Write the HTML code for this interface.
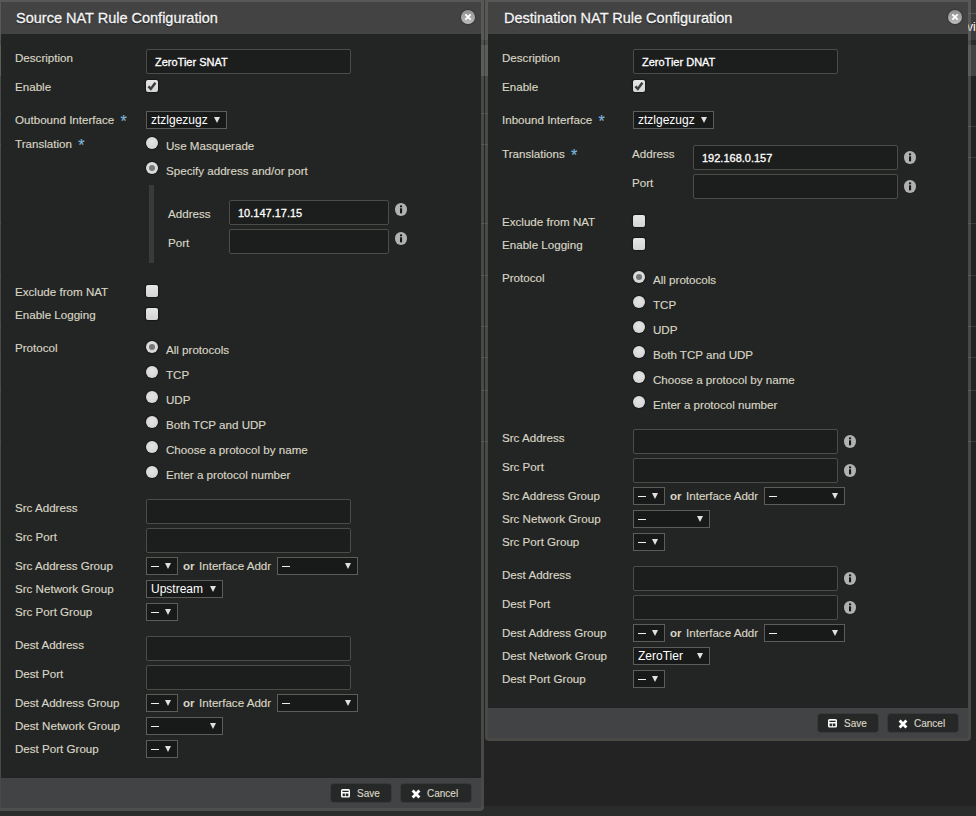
<!DOCTYPE html><html><head><meta charset="utf-8"><style>
html,body{margin:0;padding:0;width:976px;height:816px;overflow:hidden;background:#222322;position:relative;font-family:"Liberation Sans",sans-serif}
div{position:absolute;box-sizing:border-box}
.bg1{left:0;top:0;width:976px;height:40px;background:#3b3b3b}
.bg2{left:0;top:40px;width:976px;height:5px;background:#2b2b2b}
.bg3{left:0;top:45px;width:976px;height:31px;background:#434343}
.bgl{left:0;width:976px;height:1px;background:#3a3b3b}
.bgb{left:0;top:806px;width:976px;height:10px;background:#2a2b2b}
.dlg{border:3px solid rgba(128,128,124,0.42);border-radius:0 0 4px 4px;box-sizing:content-box}
.hdr{left:0;top:0;width:480px;height:32px;background:#434344}
.body{left:0;top:32px;width:480px;background:#232524}
.ftr{left:0;width:480px;height:30px;background:#424344}
.title{font-size:14.5px;color:#f5f5f5;line-height:18px;white-space:nowrap;text-shadow:0 1px 1px rgba(0,0,0,0.7);-webkit-text-stroke:0.3px #f5f5f5}
.lbl,.opt{font-size:11.6px;line-height:14px;color:#d9d5c5;white-space:nowrap;-webkit-text-stroke:0.15px #d9d5c5}
.star{color:#5aaee6;font-size:16px;line-height:10px;display:inline-block;vertical-align:-3px;margin-left:3px}
.inp{border:1px solid #4c4b48;border-radius:2px;background:#1c1d1d}
.itxt{position:absolute;left:8px;top:5px;font-size:11px;line-height:14px;color:#fff;white-space:nowrap;-webkit-text-stroke:0.3px #fff}
.sel{height:18px;border:1px solid #5e5c58;background:#181919}
.stxt{position:absolute;left:4px;top:1px;font-size:12px;line-height:15px;color:#fff;white-space:nowrap}
.arr{position:absolute;right:6px;top:5px;width:0;height:0;border-left:3.3px solid transparent;border-right:3.3px solid transparent;border-top:6px solid #e0e0e0}
.chk{width:12px;height:12px;border-radius:2px;background:linear-gradient(#e6e6e6,#d4d4d4);box-shadow:0 0 1px 1px rgba(0,0,0,0.35)}
.chk svg{position:absolute;left:0;top:0}
.rad{width:12px;height:12px;border-radius:50%;background:radial-gradient(circle at 50% 40%,#e4e4e4,#d0d0d0);box-shadow:0 0 1px 1px rgba(0,0,0,0.3)}
.rad i{position:absolute;left:3px;top:3px;width:6px;height:6px;border-radius:50%;background:#767676}
.info{width:12px;height:12.5px;border-radius:50%;background:#b1b1b1}
.info svg{position:absolute;left:0;top:0}
.vbar{background:#3a3b39}
.btn{height:18px;background:#262828;border-radius:3px;box-shadow:0 0 0 1px rgba(30,30,30,0.25)}
.btn svg{position:absolute;left:10px;top:5px}
.btn svg.fl{top:5px}
.btn span{position:absolute;left:26px;top:4px;font-size:10px;line-height:12px;color:#d9d5c5;white-space:nowrap;-webkit-text-stroke:0.15px #d9d5c5}
.close{width:14px;height:14px;border-radius:50%;background:linear-gradient(#8e8e8e,#bdbdbd);box-shadow:0 0 1px 1px rgba(0,0,0,0.18)}
.close svg{position:absolute;left:0;top:0}
.or{font-weight:bold;-webkit-text-stroke:0 !important}
.dash{position:absolute;left:3.5px;top:8.2px;width:8.4px;height:1.2px;background:#eeeeee}
</style></head><body>
<div class="bg1"></div><div class="bgl" style="top:13px;left:968px;width:8px;background:#565656"></div><div class="bg2"></div><div class="bg3"></div>

<div class="bgl" style="top:223px"></div>
<div class="bgl" style="top:275px"></div>
<div class="bgl" style="top:326px"></div>
<div class="bgl" style="top:357px"></div>
<div class="bgl" style="top:390px"></div>
<div class="bgl" style="top:441px"></div>
<div class="bgl" style="top:113px;width:700px"></div>
<div class="bgl" style="top:144px;width:700px"></div>
<div class="bgl" style="top:126px;left:700px;width:276px"></div>
<div class="bgl" style="top:157px;left:700px;width:276px"></div>
<div class="bgb"></div>
<div style="left:967px;top:20px;font-size:12px;line-height:14px;color:#fff">vie</div>
<div class="dlg" style="left:-2px;top:-1px;width:480px;height:806px">
<div class="hdr"></div><div class="body" style="height:744px"></div><div class="ftr" style="top:776px"></div>
</div>
<div class="dlg" style="left:485px;top:-1px;width:480px;height:736px">
<div class="hdr"></div><div class="body" style="height:674px"></div><div class="ftr" style="top:706px"></div>
</div>
<div class="title" style="left:16px;top:9px">Source NAT Rule Configuration</div>
<div class="close" style="left:461px;top:10px"><svg width="14" height="14" viewBox="0 0 14 14"><path d="M4.3 4.3 L9.7 9.7 M9.7 4.3 L4.3 9.7" stroke="#fff" stroke-width="1.8"/></svg></div>
<div class="title" style="left:504px;top:9px">Destination NAT Rule Configuration</div>
<div class="close" style="left:948px;top:10px"><svg width="14" height="14" viewBox="0 0 14 14"><path d="M4.3 4.3 L9.7 9.7 M9.7 4.3 L4.3 9.7" stroke="#fff" stroke-width="1.8"/></svg></div>
<div class="lbl" style="left:15px;top:51px">Description</div>
<div class="inp" style="left:146px;top:49px;width:205px;height:25px"><span class="itxt">ZeroTier SNAT</span></div>
<div class="lbl" style="left:15px;top:80px">Enable</div>
<div class="chk" style="left:146px;top:80px"><svg width="12" height="12" viewBox="0 0 12 12"><path d="M2.4 6.4 L4.8 8.9 L9.4 2.7" stroke="#3c3c3c" stroke-width="2.5" fill="none" stroke-linecap="butt"/></svg></div>
<div class="lbl" style="left:15px;top:113px">Outbound Interface <span class="star">*</span></div>
<div class="sel" style="left:146px;top:111px;width:81px"><span class="stxt">ztzlgezugz</span><i class="arr"></i></div>
<div class="lbl" style="left:15px;top:137px">Translation <span class="star">*</span></div>
<div class="rad" style="left:146px;top:137px"></div>
<div class="opt" style="left:166px;top:139px">Use Masquerade</div>
<div class="rad" style="left:146px;top:162px"><i></i></div>
<div class="opt" style="left:166px;top:164px">Specify address and/or port</div>
<div class="vbar" style="left:149px;top:185px;width:5px;height:78px"></div>
<div class="lbl" style="left:168px;top:207px">Address</div>
<div class="inp" style="left:229px;top:200px;width:160px;height:25px"><span class="itxt">10.147.17.15</span></div>
<div class="info" style="left:395px;top:203px"><svg width="12" height="12" viewBox="0 0 12 12"><rect x="5" y="2.4" width="2.1" height="1.9" fill="#161616"/><rect x="5" y="5.3" width="2.1" height="5" fill="#161616"/></svg></div>
<div class="lbl" style="left:168px;top:236px">Port</div>
<div class="inp" style="left:229px;top:229px;width:160px;height:25px"></div>
<div class="info" style="left:395px;top:232px"><svg width="12" height="12" viewBox="0 0 12 12"><rect x="5" y="2.4" width="2.1" height="1.9" fill="#161616"/><rect x="5" y="5.3" width="2.1" height="5" fill="#161616"/></svg></div>
<div class="lbl" style="left:15px;top:285px">Exclude from NAT</div>
<div class="chk" style="left:146px;top:285px"></div>
<div class="lbl" style="left:15px;top:308px">Enable Logging</div>
<div class="chk" style="left:146px;top:308px"></div>
<div class="lbl" style="left:15px;top:341px">Protocol</div>
<div class="rad" style="left:146px;top:341px"><i></i></div>
<div class="opt" style="left:166px;top:343px">All protocols</div>
<div class="rad" style="left:146px;top:366px"></div>
<div class="opt" style="left:166px;top:368px">TCP</div>
<div class="rad" style="left:146px;top:391px"></div>
<div class="opt" style="left:166px;top:393px">UDP</div>
<div class="rad" style="left:146px;top:416px"></div>
<div class="opt" style="left:166px;top:418px">Both TCP and UDP</div>
<div class="rad" style="left:146px;top:441px"></div>
<div class="opt" style="left:166px;top:443px">Choose a protocol by name</div>
<div class="rad" style="left:146px;top:466px"></div>
<div class="opt" style="left:166px;top:468px">Enter a protocol number</div>
<div class="lbl" style="left:15px;top:501px">Src Address</div>
<div class="inp" style="left:146px;top:499px;width:205px;height:25px"></div>
<div class="lbl" style="left:15px;top:530px">Src Port</div>
<div class="inp" style="left:146px;top:528px;width:205px;height:25px"></div>
<div class="lbl" style="left:15px;top:559px">Src Address Group</div>
<div class="sel" style="left:146px;top:557px;width:32px"><i class="dash"></i><i class="arr"></i></div>
<div class="opt or" style="left:183px;top:559px">or</div>
<div class="opt" style="left:199px;top:559px">Interface Addr</div>
<div class="sel" style="left:277px;top:557px;width:81px"><i class="dash"></i><i class="arr"></i></div>
<div class="lbl" style="left:15px;top:582px">Src Network Group</div>
<div class="sel" style="left:146px;top:580px;width:77px"><span class="stxt">Upstream</span><i class="arr"></i></div>
<div class="lbl" style="left:15px;top:605px">Src Port Group</div>
<div class="sel" style="left:146px;top:603px;width:32px"><i class="dash"></i><i class="arr"></i></div>
<div class="lbl" style="left:15px;top:638px">Dest Address</div>
<div class="inp" style="left:146px;top:636px;width:205px;height:25px"></div>
<div class="lbl" style="left:15px;top:667px">Dest Port</div>
<div class="inp" style="left:146px;top:665px;width:205px;height:25px"></div>
<div class="lbl" style="left:15px;top:696px">Dest Address Group</div>
<div class="sel" style="left:146px;top:694px;width:32px"><i class="dash"></i><i class="arr"></i></div>
<div class="opt or" style="left:183px;top:696px">or</div>
<div class="opt" style="left:199px;top:696px">Interface Addr</div>
<div class="sel" style="left:277px;top:694px;width:81px"><i class="dash"></i><i class="arr"></i></div>
<div class="lbl" style="left:15px;top:719px">Dest Network Group</div>
<div class="sel" style="left:146px;top:717px;width:77px"><i class="dash"></i><i class="arr"></i></div>
<div class="lbl" style="left:15px;top:742px">Dest Port Group</div>
<div class="sel" style="left:146px;top:740px;width:32px"><i class="dash"></i><i class="arr"></i></div>
<div class="btn" style="left:331px;top:784px;width:60px"><svg width="9" height="9" viewBox="0 0 9 9"><rect x="0" y="0" width="9" height="8.6" rx="1.6" fill="#fff"/><rect x="1.4" y="1.7" width="6.2" height="1.3" fill="#262828"/><rect x="1.6" y="4.5" width="2.3" height="2.7" fill="#262828"/><rect x="4.7" y="4.5" width="2.7" height="2.7" fill="#262828"/></svg><span>Save</span></div>
<div class="btn" style="left:401px;top:784px;width:70px"><svg width="10" height="10" viewBox="0 0 10 10" style="top:4.5px"><path d="M1.6 1.6 L8.4 8.4 M8.4 1.6 L1.6 8.4" stroke="#fff" stroke-width="2.8"/></svg><span>Cancel</span></div>
<div class="lbl" style="left:502px;top:51px">Description</div>
<div class="inp" style="left:633px;top:49px;width:205px;height:25px"><span class="itxt">ZeroTier DNAT</span></div>
<div class="lbl" style="left:502px;top:80px">Enable</div>
<div class="chk" style="left:633px;top:80px"><svg width="12" height="12" viewBox="0 0 12 12"><path d="M2.4 6.4 L4.8 8.9 L9.4 2.7" stroke="#3c3c3c" stroke-width="2.5" fill="none" stroke-linecap="butt"/></svg></div>
<div class="lbl" style="left:502px;top:113px">Inbound Interface <span class="star">*</span></div>
<div class="sel" style="left:633px;top:111px;width:81px"><span class="stxt">ztzlgezugz</span><i class="arr"></i></div>
<div class="lbl" style="left:502px;top:147px">Translations <span class="star">*</span></div>
<div class="lbl" style="left:632px;top:147px">Address</div>
<div class="inp" style="left:693px;top:145px;width:205px;height:25px"><span class="itxt">192.168.0.157</span></div>
<div class="info" style="left:904px;top:151px"><svg width="12" height="12" viewBox="0 0 12 12"><rect x="5" y="2.4" width="2.1" height="1.9" fill="#161616"/><rect x="5" y="5.3" width="2.1" height="5" fill="#161616"/></svg></div>
<div class="lbl" style="left:632px;top:176px">Port</div>
<div class="inp" style="left:693px;top:174px;width:205px;height:25px"></div>
<div class="info" style="left:904px;top:180px"><svg width="12" height="12" viewBox="0 0 12 12"><rect x="5" y="2.4" width="2.1" height="1.9" fill="#161616"/><rect x="5" y="5.3" width="2.1" height="5" fill="#161616"/></svg></div>
<div class="lbl" style="left:502px;top:215px">Exclude from NAT</div>
<div class="chk" style="left:633px;top:215px"></div>
<div class="lbl" style="left:502px;top:238px">Enable Logging</div>
<div class="chk" style="left:633px;top:238px"></div>
<div class="lbl" style="left:502px;top:271px">Protocol</div>
<div class="rad" style="left:633px;top:271px"><i></i></div>
<div class="opt" style="left:653px;top:273px">All protocols</div>
<div class="rad" style="left:633px;top:296px"></div>
<div class="opt" style="left:653px;top:298px">TCP</div>
<div class="rad" style="left:633px;top:321px"></div>
<div class="opt" style="left:653px;top:323px">UDP</div>
<div class="rad" style="left:633px;top:346px"></div>
<div class="opt" style="left:653px;top:348px">Both TCP and UDP</div>
<div class="rad" style="left:633px;top:371px"></div>
<div class="opt" style="left:653px;top:373px">Choose a protocol by name</div>
<div class="rad" style="left:633px;top:396px"></div>
<div class="opt" style="left:653px;top:398px">Enter a protocol number</div>
<div class="lbl" style="left:502px;top:431px">Src Address</div>
<div class="inp" style="left:633px;top:429px;width:205px;height:25px"></div>
<div class="lbl" style="left:502px;top:460px">Src Port</div>
<div class="inp" style="left:633px;top:458px;width:205px;height:25px"></div>
<div class="info" style="left:844px;top:435px"><svg width="12" height="12" viewBox="0 0 12 12"><rect x="5" y="2.4" width="2.1" height="1.9" fill="#161616"/><rect x="5" y="5.3" width="2.1" height="5" fill="#161616"/></svg></div>
<div class="info" style="left:844px;top:464px"><svg width="12" height="12" viewBox="0 0 12 12"><rect x="5" y="2.4" width="2.1" height="1.9" fill="#161616"/><rect x="5" y="5.3" width="2.1" height="5" fill="#161616"/></svg></div>
<div class="lbl" style="left:502px;top:489px">Src Address Group</div>
<div class="sel" style="left:633px;top:487px;width:32px"><i class="dash"></i><i class="arr"></i></div>
<div class="opt or" style="left:670px;top:489px">or</div>
<div class="opt" style="left:686px;top:489px">Interface Addr</div>
<div class="sel" style="left:764px;top:487px;width:81px"><i class="dash"></i><i class="arr"></i></div>
<div class="lbl" style="left:502px;top:512px">Src Network Group</div>
<div class="sel" style="left:633px;top:510px;width:77px"><i class="dash"></i><i class="arr"></i></div>
<div class="lbl" style="left:502px;top:535px">Src Port Group</div>
<div class="sel" style="left:633px;top:533px;width:32px"><i class="dash"></i><i class="arr"></i></div>
<div class="lbl" style="left:502px;top:568px">Dest Address</div>
<div class="inp" style="left:633px;top:566px;width:205px;height:25px"></div>
<div class="lbl" style="left:502px;top:597px">Dest Port</div>
<div class="inp" style="left:633px;top:595px;width:205px;height:25px"></div>
<div class="info" style="left:844px;top:572px"><svg width="12" height="12" viewBox="0 0 12 12"><rect x="5" y="2.4" width="2.1" height="1.9" fill="#161616"/><rect x="5" y="5.3" width="2.1" height="5" fill="#161616"/></svg></div>
<div class="info" style="left:844px;top:601px"><svg width="12" height="12" viewBox="0 0 12 12"><rect x="5" y="2.4" width="2.1" height="1.9" fill="#161616"/><rect x="5" y="5.3" width="2.1" height="5" fill="#161616"/></svg></div>
<div class="lbl" style="left:502px;top:626px">Dest Address Group</div>
<div class="sel" style="left:633px;top:624px;width:32px"><i class="dash"></i><i class="arr"></i></div>
<div class="opt or" style="left:670px;top:626px">or</div>
<div class="opt" style="left:686px;top:626px">Interface Addr</div>
<div class="sel" style="left:764px;top:624px;width:81px"><i class="dash"></i><i class="arr"></i></div>
<div class="lbl" style="left:502px;top:649px">Dest Network Group</div>
<div class="sel" style="left:633px;top:647px;width:77px"><span class="stxt">ZeroTier</span><i class="arr"></i></div>
<div class="lbl" style="left:502px;top:672px">Dest Port Group</div>
<div class="sel" style="left:633px;top:670px;width:32px"><i class="dash"></i><i class="arr"></i></div>
<div class="btn" style="left:818px;top:714px;width:60px"><svg width="9" height="9" viewBox="0 0 9 9"><rect x="0" y="0" width="9" height="8.6" rx="1.6" fill="#fff"/><rect x="1.4" y="1.7" width="6.2" height="1.3" fill="#262828"/><rect x="1.6" y="4.5" width="2.3" height="2.7" fill="#262828"/><rect x="4.7" y="4.5" width="2.7" height="2.7" fill="#262828"/></svg><span>Save</span></div>
<div class="btn" style="left:888px;top:714px;width:70px"><svg width="10" height="10" viewBox="0 0 10 10" style="top:4.5px"><path d="M1.6 1.6 L8.4 8.4 M8.4 1.6 L1.6 8.4" stroke="#fff" stroke-width="2.8"/></svg><span>Cancel</span></div>
</body></html>
